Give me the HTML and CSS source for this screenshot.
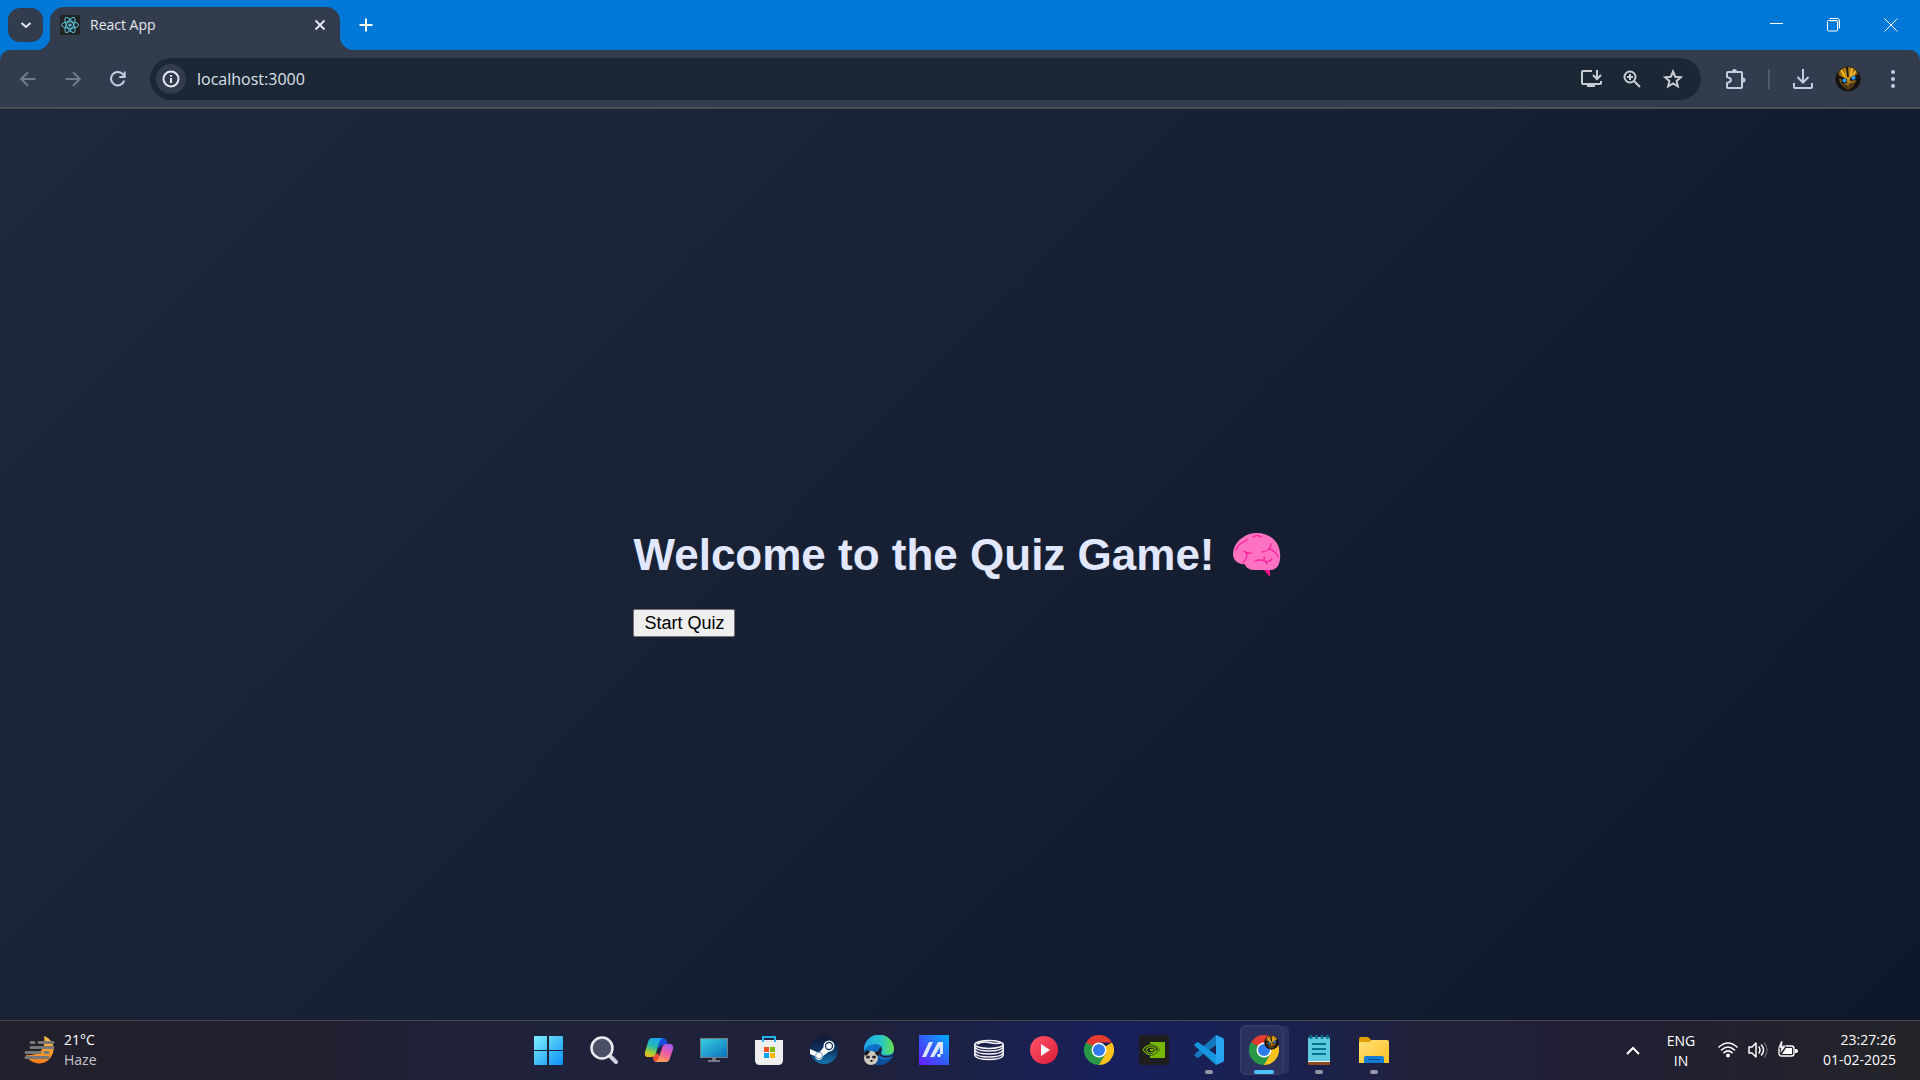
FILE: index.html
```html
<!DOCTYPE html>
<html lang="en">
<head>
<meta charset="utf-8">
<title>React App</title>
<link rel="stylesheet" href="styles.css">
</head>
<body>
<svg class="defs" width="0" height="0" aria-hidden="true">
  <defs>
    <radialGradient id="face" cx=".5" cy=".35" r=".65"><stop offset="0" stop-color="#e2a51c"/><stop offset=".55" stop-color="#a06c12"/><stop offset="1" stop-color="#1c1814"/></radialGradient>
    <symbol id="robot" viewBox="0 0 26 26">
      <circle cx="13" cy="13" r="12.500" fill="#15120f"/>
      <path d="M3 6 8 2 13 1 19 2 23 7 22 13 20 17 17 22 13 25 9 22 5 17 4 12Z" fill="url(#face)"/>
      <path d="M11 1l2 0 1 10h-2zM3 9l7 3-1 2-6-2zM24 8l-7 3v1l7-1z" fill="#1c1710"/>
      <path d="M6 4l4 7M17 2l-1 8M21 5l-3 4" stroke="#f5bd26" stroke-width="1.600"/>
      <path d="M6 12l6 1v4l-5 1zM22 9l-7 3v3l7-1z" fill="#101a2c"/>
      <circle cx="9.500" cy="14.500" r="2" fill="#2f9bf5"/><circle cx="18.500" cy="11.800" r="2" fill="#2f9bf5"/>
      <path d="M8 18l4 1 1 4h-3zM14 18l5-2-2 6-3 1z" fill="#4b3818"/>
    </symbol>
    <symbol id="chrome" viewBox="0 0 30 30">
      <path d="M15 15 28 7.500A15 15 0 0 1 15 30l-1-2Z" fill="#fcc31e"/>
      <path d="M2 7.500A15 15 0 0 0 15 30l6.500-11.200L15 15Z" fill="#269846"/>
      <path d="M2 7.500A15 15 0 0 1 28 7.500H15L8 13Z" fill="#e33b2e"/>
      <path d="M2 7.500 8.500 18.700 11 12Z" fill="#269846"/>
      <circle cx="15" cy="15" r="7.500" fill="#fff"/><circle cx="15" cy="15" r="6" fill="#2f7bed"/>
    </symbol>
  </defs>
</svg>

<header class="browser">
  <div class="tab-strip">
    <button class="tab-search" aria-label="Search tabs"><svg width="14" height="14" viewBox="0 0 14 14"><path d="M2.500 5 7 9l4.500-4" class="line"/></svg></button>
    <div class="tab">
      <svg width="20" height="20" viewBox="0 0 20 20"><rect width="20" height="20" rx="1" fill="#232323"/><g fill="none" stroke="#58c4dc" stroke-width="1"><ellipse cx="10" cy="10" rx="8.500" ry="3.300"/><ellipse cx="10" cy="10" rx="8.500" ry="3.300" transform="rotate(60 10 10)"/><ellipse cx="10" cy="10" rx="8.500" ry="3.300" transform="rotate(120 10 10)"/></g><circle cx="10" cy="10" r="1.600" fill="#58c4dc"/></svg>
      <span class="tab-title">React App</span>
      <button class="tab-close" aria-label="Close tab"><svg width="12" height="12" viewBox="0 0 12 12"><path d="M1.500 1.500l9 9M10.500 1.500l-9 9" class="line"/></svg></button>
    </div>
    <button class="new-tab" aria-label="New tab"><svg width="14" height="14" viewBox="0 0 14 14"><path d="M7 .5v13M.5 7h13" class="line white"/></svg></button>
    <div class="window-controls">
      <button aria-label="Minimize"><svg width="14" height="14" viewBox="0 0 14 14"><path d="M0 5.500h13" stroke="#fff"/></svg></button>
      <button aria-label="Restore"><svg width="14" height="14" viewBox="0 0 14 14"><path d="M3 3h8v8" fill="none" stroke="#7fbcef" stroke-width="1"/><rect x=".5" y="2.500" width="10" height="10.500" rx="1" fill="none" stroke="#fff"/><path d="M2.500 .5H10Q12.500.5 12.500 3v7.500" fill="none" stroke="#fff"/></svg></button>
      <button aria-label="Close"><svg width="14" height="14" viewBox="0 0 14 14"><path d="M.5.5l13 13M13.500.5l-13 13" stroke="#fff"/></svg></button>
    </div>
  </div>

  <div class="toolbar">
    <button class="tool dim" aria-label="Back"><svg width="16" height="16" viewBox="0 0 16 16"><path d="M15.500 8H1.500M8 1.200 1.200 8 8 14.800" class="line"/></svg></button>
    <button class="tool dim" aria-label="Forward"><svg width="16" height="16" viewBox="0 0 16 16"><path d="M.5 8h14M8 1.200 14.800 8 8 14.800" class="line"/></svg></button>
    <button class="tool" aria-label="Reload"><svg width="16" height="16" viewBox="0 0 16 16"><path d="M14.200 9.500A6.700 6.700 0 1 1 13 3.500L14.500 5.500M14.700 .5V6H9.200" class="line"/></svg></button>
    <div class="omnibox">
      <button class="site-info" aria-label="View site information"><svg width="18" height="18" viewBox="0 0 18 18"><circle cx="9" cy="9" r="7.500" class="line"/><path d="M9 8v5M9 5v1.800" class="line"/></svg></button>
      <input class="address" type="text" value="localhost:3000" aria-label="Address bar">
      <button class="omni-action" aria-label="Install app"><svg width="22" height="20" viewBox="0 0 22 20"><path d="M12 2H3Q2 2 2 3v11q0 1 1 1h17q1 0 1-1v-2M17 1v8M13 6l4 4 4-4" class="line"/><path d="M7 15h8v3H7z" fill="currentColor"/></svg></button>
      <button class="omni-action" aria-label="Zoom"><svg width="18" height="18" viewBox="0 0 18 18"><circle cx="7" cy="7" r="5.500" class="line"/><path d="M11 11l6 6M7 4v6M4 7h6" class="line"/></svg></button>
      <button class="omni-action" aria-label="Bookmark this tab"><svg width="20" height="20" viewBox="0 0 20 20"><path d="M10 2.500l2.200 5.200 5.700.5-4.300 3.700 1.300 5.600L10 14.500l-4.900 3 1.300-5.600L2.100 8.200l5.700-.5Z" class="line"/></svg></button>
    </div>
    <button class="tool" aria-label="Extensions"><svg width="22" height="22" viewBox="0 0 22 22"><path d="M3 4h13q1 0 1 1v14q0 1-1 1H3q-1 0-1-1v-4q4-1 4-3T2 9V5q0-1 1-1Z" class="line"/><path d="M7 3.500a2.500 2.500 0 0 1 5 0zM18 9.500a2.500 2.500 0 0 1 0 5z" fill="currentColor"/></svg></button>
    <span class="divider"></span>
    <button class="tool" aria-label="Downloads"><svg width="22" height="22" viewBox="0 0 22 22"><path d="M11 1v13M5.500 9l5.500 5.500L16.500 9M2 15v4q0 1 1 1h16q1 0 1-1v-4" class="line"/></svg></button>
    <button class="tool" aria-label="Profile"><svg width="26" height="26"><use href="#robot"/></svg></button>
    <button class="tool" aria-label="Menu"><svg width="6" height="20" viewBox="0 0 6 20"><g fill="currentColor"><circle cx="3" cy="3" r="2"/><circle cx="3" cy="10" r="2"/><circle cx="3" cy="17" r="2"/></g></svg></button>
  </div>
</header>

<main class="page">
  <section class="welcome">
    <h1>Welcome to the Quiz Game! <svg role="img" aria-label="brain" width="60" height="48" viewBox="0 -2 60 48">
      <path d="M36 36l7 8V35z" fill="#f5108c"/>
      <path d="M21 30C15 33 7 30 6 22 6 15 9 9 15 5 20 1 25 0 30 0c11 0 22 7 23 20 1 9-2 17-9 17H27c-5 0-9-3-10-8Z" fill="#ff72c2"/>
      <g fill="none" stroke="#fb249f" stroke-width="1.300" stroke-linecap="round"><path d="M9 17q3-7 10-9l1-2M26 4q4-3 8 0M17 18q3 3 7 2M17 18l3 3q0 5-4 8M44 11q-1 7-9 8M42 16q6 1 9 8M28 28q4-2 10 0 4 2 7-2M36 28q2-1 1-4M38 28l2 3"/></g>
    </svg></h1>
    <button class="start">Start Quiz</button>
  </section>
</main>

<footer class="taskbar">
  <button class="weather">
    <svg width="32" height="30" viewBox="0 0 32 30"><defs><linearGradient id="moon" x1="0" y1="0" x2="0" y2="1"><stop offset="0" stop-color="#fbc444"/><stop offset="1" stop-color="#f47b1c"/></linearGradient></defs><path d="M20 1C28 4 31 11 29 18 26 26 19 30 12 28 7 27 4 24 2 20 12 21 23 17 20 1Z" fill="url(#moon)"/><path d="M7 7.500h3M15 7.500h14M7 12.500h22M2 17.500h14M21 17.500h3M2 22.500h22" stroke="#777" stroke-width="3" stroke-linecap="round"/></svg>
    <span class="weather-text"><span>21°C</span><span class="muted">Haze</span></span>
  </button>

  <nav class="apps" aria-label="Taskbar">
    <button aria-label="Start"><svg width="30" height="30" viewBox="1 0 30 30"><defs><linearGradient id="win" x1="0" y1="0" x2="1" y2="1"><stop offset="0" stop-color="#7ff0ff"/><stop offset="1" stop-color="#0a90f5"/></linearGradient></defs><path d="M1 2q0-1 1-1h12v14H1zM16 1h13q1 0 1 1v13H16zM1 16h13v14H2q-1 0-1-1zM16 16h14v13q0 1-1 1H16z" fill="url(#win)"/></svg></button>
    <button aria-label="Search"><svg width="30" height="30" viewBox="0 0 30 30"><path d="M20 20l7 7" stroke="#cfd3dc" stroke-width="4" stroke-linecap="round"/><circle cx="13" cy="13" r="10.500" fill="#4b5066" stroke="#ececf0" stroke-width="2.500"/></svg></button>
    <button aria-label="Copilot"><svg width="30" height="30" viewBox="0 0 30 30"><defs><linearGradient id="cpa" x1=".6" y1="0" x2=".3" y2="1"><stop offset="0" stop-color="#1aa5ee"/><stop offset=".45" stop-color="#27b9b0"/><stop offset=".75" stop-color="#9ccc38"/><stop offset="1" stop-color="#f6b91c"/></linearGradient><linearGradient id="cpb" x1=".7" y1="0" x2=".3" y2="1"><stop offset="0" stop-color="#a45cf0"/><stop offset=".45" stop-color="#ee5aa6"/><stop offset="1" stop-color="#ffa24e"/></linearGradient></defs><path d="M16 3h3q3 0 4 4l1 3h-6l-4 4Z" fill="#184fd8"/><path d="M9 21l5-3 3 8-3 1h-2q-3 0-3-6Z" fill="#ee4a35"/><path d="M8 3h11q-3 1-4 5l-3 10q-1 4-5 4H4q-4 0-3-5L4 7q1-4 4-4Z" fill="url(#cpa)"/><path d="M22 27H11q3-1 4-5l3-9q1-4 5-4h3q4 0 3 5l-3 9q-1 4-4 4Z" fill="url(#cpb)"/></svg></button>
    <button aria-label="This PC"><svg width="30" height="30" viewBox="0 0 30 30"><defs><linearGradient id="pc" x1="0" y1="0" x2="1" y2="1"><stop offset="0" stop-color="#37d1de"/><stop offset="1" stop-color="#0d6fc0"/></linearGradient></defs><path d="M13 22h4v3h4v2H9v-2h4z" fill="#777b80"/><rect x="1.500" y="3.500" width="27" height="19" fill="url(#pc)" stroke="#777b80"/></svg></button>
    <button aria-label="Microsoft Store"><svg width="30" height="30" viewBox="0 0 30 30"><path d="M1 5h28v20q0 5-5 5H6q-5 0-5-5z" fill="#eee"/><path d="M9 7V2h12v5" fill="none" stroke="#23b4ee" stroke-width="2"/><path d="M10 12h5v5h-5z" fill="#f25022"/><path d="M16 12h5v5h-5z" fill="#7fba00"/><path d="M10 18h5v5h-5z" fill="#00a4ef"/><path d="M16 18h5v5h-5z" fill="#ffb900"/></svg></button>
    <button aria-label="Steam"><svg width="30" height="30" viewBox="0 0 30 30"><defs><linearGradient id="steam" x1="0" y1="0" x2="0" y2="1"><stop offset="0" stop-color="#111735"/><stop offset=".5" stop-color="#0b3360"/><stop offset="1" stop-color="#1478b2"/></linearGradient></defs><circle cx="15" cy="15" r="14" fill="url(#steam)"/><path d="M1 14l9 4 7-9 5 6-8 6q-1 4-4 4-3 0-4-4l-5-2z" fill="#fff"/><circle cx="20" cy="11" r="5.500" fill="#fff"/><circle cx="20" cy="11" r="3.500" fill="#fff" stroke="#153765" stroke-width="1.300"/><circle cx="10" cy="20.500" r="3.300" fill="none" stroke="#8298b4"/></svg></button>
    <button aria-label="Edge"><svg width="30" height="30" viewBox="0 0 30 30"><defs><linearGradient id="edge"><stop offset="0" stop-color="#22a6e8"/><stop offset=".55" stop-color="#25c5cd"/><stop offset="1" stop-color="#67e14a"/></linearGradient></defs><circle cx="15" cy="15" r="15" fill="#1073c9"/><path d="M0 15A15 15 0 0 1 30 14q0 6-8 6-6 0-4-4 1-6-5-7Q5 8 0 15Z" fill="url(#edge)"/><path d="M13 10q-4 7 1 12 6 5 14 0-5 9-16 8Q6 19 13 10Z" fill="#0c4f9b"/><path d="M17 12q2 2 0 5-1 4 5 4 6 0 8-3l-1 3q-9 4-14-1-3-5 2-8Z" fill="#20233b"/><circle cx="7" cy="23" r="7" fill="#cfc9bd"/><path d="M0 18l3-3 3 2-4 4zM11 17l3-1 1 5-3-1z" fill="#1c1917"/><ellipse cx="4" cy="22" rx="2" ry="1.600" fill="#282320"/><ellipse cx="10" cy="22" rx="2" ry="1.600" fill="#282320"/><path d="M6 25h3l-1 2H7z" fill="#222"/></svg></button>
    <button aria-label="MyASUS"><svg width="30" height="30" viewBox="0 0 30 30"><defs><linearGradient id="asus" x1="0" y1="1" x2="1" y2="0"><stop offset="0" stop-color="#681cf6"/><stop offset=".45" stop-color="#3657fb"/><stop offset="1" stop-color="#00adff"/></linearGradient></defs><path d="M0 0h30v30H0z" fill="url(#asus)"/><path d="M3 22 10 7h4L7 22zM11 22 19 7h5v12h-3v-7l-6 10z" fill="#dce7ff"/><circle cx="20" cy="20.500" r="1.700" fill="#fff"/></svg></button>
    <button aria-label="Ring app"><svg width="30" height="30" viewBox="0 0 30 30"><g fill="none" stroke="#f5f5f7" stroke-width="1.500"><ellipse cx="15" cy="9.500" rx="14.200" ry="4"/><path d="M.8 9.500v11M29.200 9.500v11M.8 12q2 4 14.200 4t14.200-4M.8 15q2 4 14.200 4t14.200-4M.8 18q2 4 14.200 4t14.200-4M.8 20.500q2 4 14.200 4t14.200-4M3 9q5-3 12-1.500T27 8"/></g></svg></button>
    <button aria-label="Media player"><svg width="30" height="30" viewBox="0 0 30 30"><defs><linearGradient id="play" x1="0" y1="0" x2="1" y2="1"><stop offset="0" stop-color="#ff536b"/><stop offset="1" stop-color="#da1d35"/></linearGradient></defs><circle cx="15" cy="15" r="14" fill="url(#play)"/><path d="M12 9l9 6-9 6z" fill="#fff"/></svg></button>
    <button aria-label="Chrome"><svg width="30" height="30"><use href="#chrome"/></svg></button>
    <button aria-label="NVIDIA"><svg width="30" height="30" viewBox="0 0 30 30"><path d="M0 0h30v30H0z" fill="#1e1e1e"/><path d="M11 7h15v16H11z" fill="#76b900"/><path d="M11 9Q5 11 3 15q3 5 8 6 6-1 10-6-4-6-10-6Z" fill="#1e1e1e"/><path d="M11 10Q6 11 4 15q3 4 7 5 5-1 9-5-4-5-9-5ZM11 12q-3 1-4 3 2 3 4 3 4 0 6-3-2-3-6-3Z" fill="none" stroke="#76b900" stroke-width="1.200"/><path d="M11 14q3-1 4 1-2 2-4 1z" fill="#76b900"/></svg></button>
    <button class="running" aria-label="Visual Studio Code"><svg width="30" height="30" viewBox="0 0 30 30"><path d="M22 0 2 18l-2 2 2 2 2 1L25 8z" fill="#1478bd"/><path d="M2 8 0 10l2 2 20 18 3-8L4 7z" fill="#1695df"/><path d="M22 0l7 3q1 1 1 2v20q0 1-1 2l-7 3V8z" fill="#27a5f3"/></svg></button>
    <button class="running active" aria-label="React App - Google Chrome"><svg width="30" height="30" viewBox="0 0 30 30"><use href="#chrome" width="30" height="30"/><use href="#robot" x="15" y="0" width="15" height="15"/></svg></button>
    <button class="running" aria-label="Notepad"><svg width="30" height="30" viewBox="0 0 30 30"><path d="M4 25h22v4q0 1-1 1H5q-1 0-1-1z" fill="#8d4b20"/><path d="M4 24h22v3H4z" fill="#eef6f7"/><path d="M4 4q0-2 2-2h18q2 0 2 2v22H4z" fill="#5ecae0"/><path d="M8 9h14M8 14h14M8 19h14" stroke="#087391" stroke-width="2"/><path d="M7 0v4M12.500 0v4M18 0v4M23.500 0v4" stroke="#087391" stroke-width="2.500"/></svg></button>
    <button class="running" aria-label="File Explorer"><svg width="30" height="30" viewBox="0 0 30 30"><defs><linearGradient id="folder" x1="0" y1="0" x2="1" y2="1"><stop offset="0" stop-color="#ffe07a"/><stop offset="1" stop-color="#ffc224"/></linearGradient></defs><path d="M0 4q0-2 2-2h7l4 4v5H0z" fill="#e2a006"/><path d="M0 7h10l3-2h15q2 0 2 2v21H0z" fill="url(#folder)"/><path d="M5 28v-5q0-2 2-2h16q2 0 2 2v5z" fill="#157bd4"/><path d="M9 24.500h12" stroke="#0b4f96"/></svg></button>
  </nav>

  <div class="tray">
    <button class="overflow" aria-label="Show hidden icons"><svg width="14" height="10" viewBox="0 0 14 10"><path d="M1 8l6-6 6 6" class="line white"/></svg></button>
    <button class="language"><span>ENG</span><span>IN</span></button>
    <button class="status" aria-label="Network, volume and battery">
      <svg width="20" height="16" viewBox="0 0 20 16"><g fill="none" stroke="#fff" stroke-width="1.600" stroke-linecap="round"><path d="M1 5q9-8 18 0M3.500 8q6.500-6 13 0M6 10.700q4-3.500 8 0"/></g><circle cx="10" cy="13.500" r="1.900" fill="#fff"/></svg>
      <svg width="20" height="16" viewBox="0 0 20 16"><g fill="none" stroke="#fff" stroke-width="1.500" stroke-linecap="round" stroke-linejoin="round"><path d="M1 5h3l4-4v14l-4-4H1zM11 5q2 3 0 6M13.500 3q4 5 0 10"/><path d="M16.500 1q5 7 0 14" stroke="#5c5d66"/></g></svg>
      <svg width="20" height="18" viewBox="0 0 20 18"><rect x="1" y="5" width="15" height="10" rx="2.500" fill="none" stroke="#fff" stroke-width="1.400"/><path d="M14 7v6H4l4-6zM17 8h1q2 0 2 2t-2 2h-1z" fill="#fff"/><path d="M3 0 0 7h3l-1 6 6-8H4l1-5z" fill="#fff" stroke="#222330" stroke-width=".6"/></svg>
    </button>
    <button class="clock"><span>23:27:26</span><span>01-02-2025</span></button>
  </div>
</footer>
</body>
</html>
```
FILE: styles.css
```css
* { box-sizing: border-box; }

body {
  margin: 0;
  min-height: 100vh;
  display: flex;
  flex-direction: column;
  background: #0f172a;
  font-family: "Open Sans", "Noto Sans", sans-serif;
  color: #fff;
}

button {
  display: flex;
  align-items: center;
  justify-content: center;
  padding: 0;
  border: 0;
  background: none;
  color: inherit;
  font: inherit;
}

svg { flex: none; display: block; }
.defs { position: absolute; }
.line { fill: none; stroke: currentColor; stroke-width: 2; }
.white { stroke: #fff; }

/* Browser frame */
.browser { background: #0078d7; }

.tab-strip {
  display: flex;
  height: 50px;
  padding-left: 8px;
}

.tab-search {
  width: 35px;
  height: 34px;
  margin: 8px 7px 0 0;
  border-radius: 12px;
  background: #323c4d;
  color: #e4e8f0;
}

.tab {
  position: relative;
  display: flex;
  align-items: center;
  width: 290px;
  height: 43px;
  margin-top: 7px;
  padding: 0 12px 7px 10px;
  gap: 10px;
  border-radius: 14px 14px 0 0;
  background: #323c4d;
  color: #e4e8f0;
}

.tab::before,
.tab::after {
  content: "";
  position: absolute;
  bottom: 0;
  width: 15px;
  height: 15px;
}

.tab::before { right: 100%; background: radial-gradient(circle at 0 0, transparent 15px, #323c4d 16px); }
.tab::after { left: 100%; background: radial-gradient(circle at 100% 0, transparent 15px, #323c4d 16px); }

.tab-title { flex: 1; font-size: 14px; line-height: 20px; }
.tab-close { width: 16px; height: 16px; }
.new-tab { width: 34px; height: 34px; margin: 8px 0 0 9px; }

.window-controls {
  display: flex;
  height: 50px;
  margin-left: auto;
  padding-right: 1px;
}
.window-controls button { width: 57px; }

.toolbar {
  display: flex;
  align-items: center;
  height: 59px;
  padding: 1px 10px 0;
  border-bottom: 2px solid #4a4f56;
  border-radius: 10px 10px 0 0;
  background: #323c4d;
  color: #c3cde2;
}

.tool { width: 35px; height: 35px; margin-right: 10px; }
.tool:last-child { margin-right: 0; }
.dim { color: #727b8b; }

.omnibox {
  display: flex;
  flex: 1;
  align-items: center;
  height: 42px;
  margin: 0 17px 0 5px;
  padding: 0 8px 0 6px;
  border-radius: 21px;
  background: #1c2736;
  color: #c9ccd2;
}

.site-info {
  width: 30px;
  height: 30px;
  border-radius: 50%;
  background: #323c4d;
  color: #e4e8f0;
}

.address {
  flex: 1;
  min-width: 0;
  padding: 0 11px;
  border: 0;
  outline: 0;
  background: none;
  color: #dbe0e9;
  font: 16px/24px "Open Sans", "Noto Sans", sans-serif;
}

.omni-action { width: 41px; height: 32px; }
.divider { width: 2px; height: 20px; margin: 0 15px 0 5px; background: #505a6b; }

/* Quiz page */
.page {
  display: flex;
  flex: 1;
  align-items: center;
  justify-content: center;
  background: linear-gradient(135deg, #1e293b, #0f172a);
  font-family: "Liberation Sans", Arial, sans-serif;
}

h1 {
  display: flex;
  align-items: center;
  gap: 12px;
  margin: 36px 0 28px;
  color: #e0e7ff;
  font-size: 44px;
  line-height: 52px;
}

.start {
  padding: 2px 10px;
  border: 1px solid #767676;
  border-radius: 2px;
  background: #efefef;
  color: #000;
  font-size: 18px;
  line-height: 22px;
}

/* Taskbar */
.taskbar {
  display: grid;
  grid-template-columns: 1fr auto 1fr;
  height: 60px;
  border-top: 1px solid #45474f;
  background: linear-gradient(90deg, #22202c 0%, #211f2d 13%, #1f223b 28%, #1f213a 45%, #17205a 58%, #192152 66%, #20213a 74%, #211f32 85%, #222429 100%);
  font-size: 14px;
  line-height: 20px;
}

.weather { justify-self: start; gap: 8px; padding-left: 24px; padding-bottom: 2px; }
.weather-text { display: flex; flex-direction: column; text-align: left; }
.muted { color: #c4c4ca; }

.apps { display: flex; padding-left: 3px; }
.apps button { position: relative; width: 55px; height: 58px; }

.running::after {
  content: "";
  position: absolute;
  bottom: 5px;
  width: 8px;
  height: 4px;
  border-radius: 2px;
  background: #9698a8;
}

.active::before {
  content: "";
  position: absolute;
  inset: 4px 8px 4px 3px;
  border: 1px solid #3a4166;
  border-radius: 6px;
  background: #ffffff14;
  box-shadow: 6px 0 0 -1px #ffffff12;
}

.active::after { width: 20px; background: #4cc2ff; }
.active svg { position: relative; }

.tray { display: flex; justify-content: flex-end; padding-right: 24px; }
.overflow { width: 40px; }
.language { flex-direction: column; width: 56px; }
.status { width: 92px; margin-left: 3px; gap: 10px; padding-bottom: 1px; }
.clock { flex-direction: column; align-items: flex-end; width: 92px; padding-bottom: 2px; }
```
